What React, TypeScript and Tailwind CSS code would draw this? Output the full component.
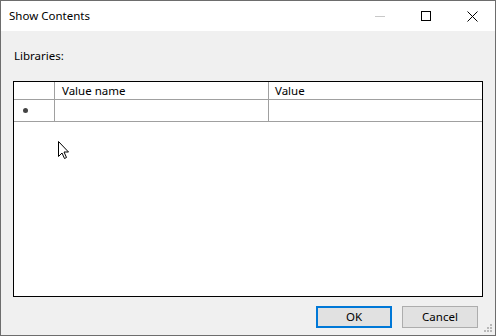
export default function App() {
  return (
    <div
      className="relative w-[496px] h-[336px] flex flex-col bg-[#f0f0f0] border border-[#6d6d6d] text-[11.5px] text-black overflow-hidden"
      style={{ fontFamily: '"Noto Sans", "Liberation Sans", sans-serif' }}
    >
      {/* Title bar */}
      <div className="h-[30px] bg-white flex items-center shrink-0">
        <span className="pl-[8px] flex-1">Show Contents</span>
        <div className="flex h-full">
          <div className="w-[46px] flex items-center justify-center">
            <div className="w-[10px] h-px bg-[#c8c8c8]" />
          </div>
          <div className="w-[46px] flex items-center justify-center">
            <div className="w-[10px] h-[10px] border border-black" />
          </div>
          <div className="w-[46px] flex items-center justify-center">
            <svg width="11" height="11" viewBox="0 0 11 11">
              <path d="M0.5 0.5 L10.5 10.5 M10.5 0.5 L0.5 10.5" stroke="black" strokeWidth="1" />
            </svg>
          </div>
        </div>
      </div>

      {/* Body */}
      <div className="flex-1 flex flex-col px-[12px] pt-[17px]">
        <div className="h-[16px] leading-[16px] pl-[1px]">Libraries:</div>
        <div className="mt-[17px] w-[470px] h-[216px] border border-black bg-white">
          <div className="flex h-[18px] border-b border-[#a0a0a0]">
            <div className="w-[41px] border-r border-[#a0a0a0]" />
            <div className="w-[214px] border-r border-[#a0a0a0] pl-[7px] leading-[17px]">Value name</div>
            <div className="flex-1 pl-[6px] leading-[17px]">Value</div>
          </div>
          <div className="flex h-[22px] border-b border-[#a0a0a0]">
            <div className="w-[41px] border-r border-[#a0a0a0] bg-white flex items-center pl-[9px]">
              <div className="w-[5px] h-[5px] rounded-full bg-[#444]" />
            </div>
            <div className="w-[214px] border-r border-[#a0a0a0]" />
            <div className="flex-1" />
          </div>
        </div>

        {/* Buttons */}
        <div className="flex justify-end gap-[10px] mt-[9px] pr-[5px]">
          <button className="w-[76px] h-[22px] bg-[#e1e1e1] border-2 border-[#0078d7] leading-[18px]">OK</button>
          <button className="w-[76px] h-[22px] bg-[#e1e1e1] border border-[#adadad] leading-[20px]">Cancel</button>
        </div>
      </div>

      {/* Size grip */}
      <svg className="absolute right-[2px] bottom-[2px]" width="10" height="10" viewBox="0 0 10 10">
        <g fill="#b8b8b8">
          <rect x="7" y="1" width="2" height="2" />
          <rect x="4" y="4" width="2" height="2" />
          <rect x="7" y="4" width="2" height="2" />
          <rect x="1" y="7" width="2" height="2" />
          <rect x="4" y="7" width="2" height="2" />
          <rect x="7" y="7" width="2" height="2" />
        </g>
      </svg>

      {/* Mouse cursor */}
      <svg className="absolute left-[57px] top-[140px]" width="12" height="19" viewBox="0 0 12 19">
        <path
          d="M0.5 0.5 L0.5 15.5 L4 12 L6.5 17.5 L8.5 16.5 L6 11 L10.5 11 Z"
          fill="white"
          stroke="black"
          strokeWidth="1"
          strokeLinejoin="miter"
        />
      </svg>
    </div>
  );
}
